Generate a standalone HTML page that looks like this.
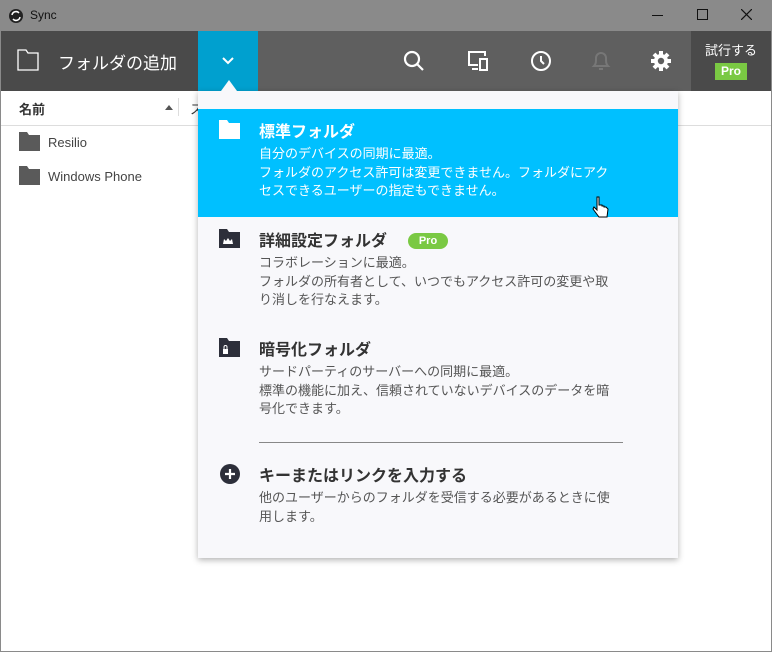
<!DOCTYPE html><html><head><meta charset="utf-8"><style>
body{margin:0;width:772px;height:652px;overflow:hidden;font-family:"Liberation Sans","Noto Sans CJK JP",sans-serif;background:#fff;position:relative}
.a{position:absolute}
.title{left:0;top:0;width:772px;height:31px;background:#8a8a8a}
.tb{left:0;top:31px;width:772px;height:60px;background:#5f5f5f}
.win{left:0;top:0;width:770px;height:650px;border:1px solid #8a8a8a;pointer-events:none}
.h{font-size:16px;font-weight:bold;color:#333}
.d{font-size:13px;color:#555;line-height:18.5px}
</style></head><body>
<div class="a title"></div>
<svg class="a" style="left:8px;top:8px" width="16" height="16"><circle cx="8" cy="8" r="7" fill="#222"/><path d="M4 7a4 4 0 0 1 7-2M12 9a4 4 0 0 1-7 2" stroke="#fff" stroke-width="1.5" fill="none"/></svg>
<div class="a" style="left:30px;top:8px;font-size:12px;color:#111">Sync</div>
<div class="a" style="left:652px;top:15px;width:11px;height:1px;background:#111"></div>
<div class="a" style="left:697px;top:9px;width:9px;height:9px;border:1px solid #111"></div>
<svg class="a" style="left:741px;top:9px" width="11" height="11"><path d="M0 0l11 11M11 0L0 11" stroke="#111" stroke-width="1.2"/></svg>
<div class="a tb"></div>
<div class="a" style="left:0;top:31px;width:198px;height:60px;background:#4a4a4a"></div>
<div class="a" style="left:198px;top:31px;width:60px;height:60px;background:#00a0cf"></div>
<div class="a" style="left:691px;top:31px;width:81px;height:60px;background:#4a4a4a"></div>
<svg class="a" style="left:17px;top:49px" width="22" height="22"><path d="M1 1h8l2 3h10v17H1z" stroke="#fff" stroke-width="1.3" fill="none"/></svg>
<div class="a" style="left:58px;top:49px;font-size:17px;color:#fff">フォルダの追加</div>
<svg class="a" style="left:221px;top:56px" width="14" height="10"><path d="M2 2l5 5 5-5" stroke="#fff" stroke-width="2" fill="none"/></svg>
<svg class="a" style="left:402px;top:49px" width="24" height="24"><circle cx="10" cy="10" r="7" stroke="#fff" stroke-width="2.2" fill="none"/><path d="M15 15l6 6" stroke="#fff" stroke-width="2.2"/></svg>
<svg class="a" style="left:466px;top:49px" width="24" height="24"><path d="M12 16H3V3h16v4" stroke="#fff" stroke-width="2" fill="none"/><rect x="14" y="10" width="7" height="11" stroke="#fff" stroke-width="2" fill="none"/><path d="M6 20h6" stroke="#fff" stroke-width="2"/></svg>
<svg class="a" style="left:529px;top:49px" width="24" height="24"><circle cx="12" cy="12" r="9" stroke="#fff" stroke-width="2" fill="none"/><path d="M12 7v5l3 3" stroke="#fff" stroke-width="2" fill="none"/></svg>
<svg class="a" style="left:590px;top:48px" width="22" height="24"><path d="M4 18c2-2 2-4 2-8a5 5 0 0 1 10 0c0 4 0 6 2 8z" stroke="#777" stroke-width="2" fill="none"/><path d="M9 21h4" stroke="#777" stroke-width="2"/></svg>
<svg class="a" style="left:650px;top:50px" width="22" height="22" viewBox="0 0 22 22"><g fill="#fff"><circle cx="11" cy="11" r="7"/><g stroke="#fff" stroke-width="4"><path d="M11 1v20M1 11h20M4 4l14 14M18 4L4 18"/></g></g><circle cx="11" cy="11" r="3.2" fill="#5f5f5f"/></svg>
<div class="a" style="left:705px;top:40px;font-size:13px;color:#fff">試行する</div>
<div class="a" style="left:715px;top:63px;width:32px;height:17px;background:#7ac943;color:#fff;font-size:12px;font-weight:bold;text-align:center;line-height:17px">Pro</div>
<div class="a" style="left:19px;top:99px;font-size:13px;font-weight:bold;color:#333">名前</div>
<div class="a" style="left:165px;top:105px;border:4px solid transparent;border-bottom:5px solid #555;border-top:0"></div>
<div class="a" style="left:178px;top:98px;width:1px;height:18px;background:#ddd"></div>
<div class="a" style="left:190px;top:99px;font-size:13px;color:#333">ス</div>
<div class="a" style="left:0;top:125px;width:772px;height:1px;background:#ddd"></div>
<svg class="a" style="left:19px;top:132px" width="21" height="19"><path d="M0 0h8l2 3h11v16H0z" fill="#5a5a5a"/></svg>
<div class="a" style="left:48px;top:135px;font-size:13px;color:#444">Resilio</div>
<svg class="a" style="left:19px;top:166px" width="21" height="19"><path d="M0 0h8l2 3h11v16H0z" fill="#5a5a5a"/></svg>
<div class="a" style="left:48px;top:169px;font-size:13px;color:#444">Windows Phone</div>
<div class="a" style="left:198px;top:91px;width:480px;height:467px;background:#f8f8fb;box-shadow:0 2px 6px rgba(0,0,0,.3)"></div>
<div class="a" style="left:221px;top:80px;border:8px solid transparent;border-bottom:11px solid #f8f8fb;border-top:0"></div>
<div class="a" style="left:198px;top:109px;width:480px;height:108px;background:#00c0ff"></div>
<svg class="a" style="left:219px;top:120px" width="21" height="19"><path d="M0 0h8l2 3h11v16H0z" fill="#fff"/></svg>
<div class="a h" style="left:259px;top:118px;color:#fff">標準フォルダ</div>
<div class="a d" style="left:259px;top:145px;color:#fff">自分のデバイスの同期に最適。<br>フォルダのアクセス許可は変更できません。フォルダにアク<br>セスできるユーザーの指定もできません。</div>
<svg class="a" style="left:219px;top:229px" width="21" height="19"><path d="M0 0h8l2 3h11v16H0z" fill="#2d2f3a"/><path d="M4 15l1-5 2 2 2-3 2 3 2-2 1 5z" fill="#fff"/></svg>
<div class="a h" style="left:259px;top:227px">詳細設定フォルダ</div>
<div class="a" style="left:408px;top:233px;width:40px;height:16px;border-radius:8px;background:#7ac943;color:#fff;font-size:11px;font-weight:bold;text-align:center;line-height:16px">Pro</div>
<div class="a d" style="left:259px;top:254px">コラボレーションに最適。<br>フォルダの所有者として、いつでもアクセス許可の変更や取<br>り消しを行なえます。</div>
<svg class="a" style="left:219px;top:338px" width="21" height="19"><path d="M0 0h8l2 3h11v16H0z" fill="#2d2f3a"/><rect x="4" y="11" width="5" height="5" fill="#fff"/><path d="M5 11V9a1.5 1.5 0 0 1 3 0v2" stroke="#fff" fill="none"/></svg>
<div class="a h" style="left:259px;top:336px">暗号化フォルダ</div>
<div class="a d" style="left:259px;top:363px">サードパーティのサーバーへの同期に最適。<br>標準の機能に加え、信頼されていないデバイスのデータを暗<br>号化できます。</div>
<div class="a" style="left:259px;top:442px;width:364px;height:1px;background:#888"></div>
<svg class="a" style="left:219px;top:463px" width="22" height="22"><circle cx="11" cy="11" r="10" fill="#2d2f3a"/><path d="M11 6v10M6 11h10" stroke="#fff" stroke-width="2.2"/></svg>
<div class="a h" style="left:259px;top:462px">キーまたはリンクを入力する</div>
<div class="a d" style="left:259px;top:489px">他のユーザーからのフォルダを受信する必要があるときに使<br>用します。</div>
<svg class="a" style="left:592px;top:196px" width="18" height="24"><path d="M5 1v13l-3-3-1 2 6 8h8l1-8-2-2h-2v-1h-2v-1H7V1z" fill="#fff" stroke="#000"/></svg>
<div class="a win"></div>
</body></html>
